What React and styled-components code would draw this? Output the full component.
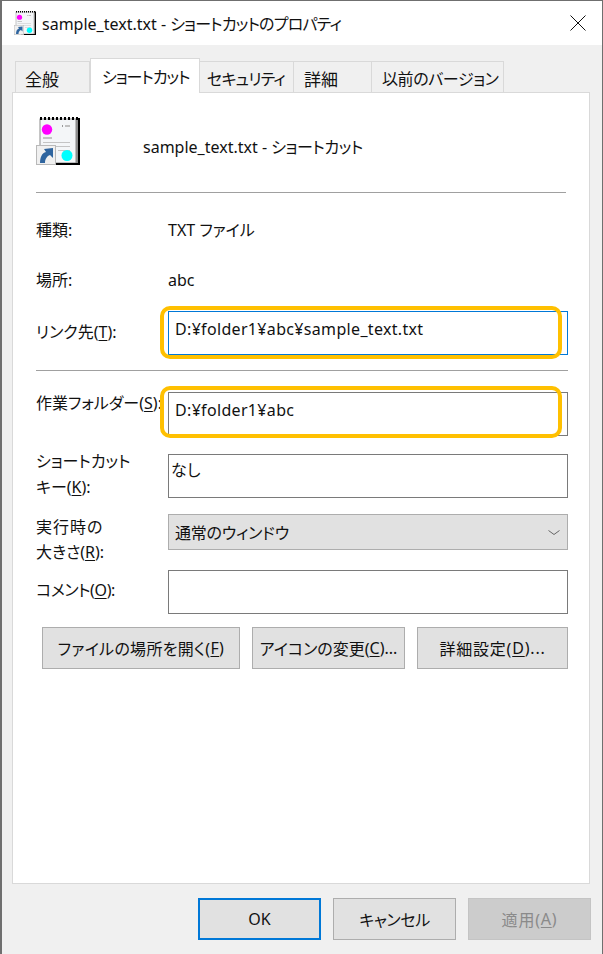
import React from 'react';
import styled, { createGlobalStyle } from 'styled-components';

const fontStack = `"Noto Sans", "Noto Sans CJK JP", sans-serif`;

const GlobalStyle = createGlobalStyle`
  html, body {
    margin: 0;
    padding: 0;
    background: #f0f0f0;
  }
  * {
    box-sizing: border-box;
  }
`;

const Window = styled.div`
  width: 603px;
  height: 954px;
  display: flex;
  flex-direction: column;
  border: 1px solid #6f6f6f;
  border-left-width: 2px;
  border-bottom: none;
  background: #f0f0f0;
  font-family: ${fontStack};
  font-size: 16px;
  font-feature-settings: "palt";
  color: #111;
  overflow: hidden;
`;

const TitleBar = styled.div`
  height: 44px;
  flex: none;
  display: flex;
  align-items: center;
  background: #fff;
  padding: 0 16px 0 12px;
  gap: 6px;
`;

const TitleText = styled.div`
  flex: 1;
  font-size: 16px;
`;

// kana run with its own tracking, the reference font sets kana tighter or kanji wider
const Spaced = styled.span`
  letter-spacing: ${(p) => p.$ls}px;
`;

const Body = styled.div`
  flex: 1;
  display: flex;
  flex-direction: column;
  padding: 13px 11px 0 10px;
`;

const TabBar = styled.div`
  display: flex;
  align-items: flex-end;
  height: 34px;
  padding-left: 4px;
  position: relative;
  z-index: 1;
`;

const Tab = styled.div`
  width: ${(p) => p.$w}px;
  height: ${(p) => (p.$active ? 35 : 31)}px;
  margin-bottom: ${(p) => (p.$active ? -1 : 0)}px;
  margin-left: ${(p) => (p.$active ? 0 : -1)}px;
  padding-left: ${(p) => p.$pl}px;
  padding-top: ${(p) => (p.$active ? 0 : 2)}px;
  padding-bottom: ${(p) => (p.$active ? 1 : 0)}px;
  display: flex;
  align-items: center;
  background: ${(p) => (p.$active ? '#fff' : '#f0f0f0')};
  border: 1px solid #d9d9d9;
  border-bottom: none;
  font-size: ${(p) => p.$size || 16}px;
  letter-spacing: ${(p) => p.$ls || 0}px;
  white-space: nowrap;
`;

const Panel = styled.div`
  width: 578px;
  height: 792px;
  background: #fff;
  border: 1px solid #d9d9d9;
  padding: 22px 22px 0 23px;
`;

const Header = styled.div`
  display: flex;
  align-items: center;
  height: 52px;
  margin-bottom: 25px;
`;

const HeaderName = styled.div`
  margin-left: 63px;
  margin-top: 10px;
`;

const Divider = styled.div`
  height: 1px;
  width: ${(p) => p.$w}px;
  background: #a0a0a0;
  margin-top: ${(p) => p.$mt || 0}px;
`;

const Row = styled.div`
  display: grid;
  grid-template-columns: 132px 400px;
  grid-template-rows: ${(p) => p.$h}px;
  margin-top: ${(p) => p.$mt}px;
`;

const Label = styled.div`
  margin-top: ${(p) => p.$top || 0}px;
  line-height: ${(p) => p.$lh || 24}px;
  letter-spacing: ${(p) => p.$ls || 0}px;
  white-space: nowrap;
`;

const Value = styled.div`
  line-height: 24px;
`;

const FieldWrap = styled.div`
  position: relative;
`;

const Input = styled.div`
  height: 100%;
  background: #fff;
  border: 1px solid ${(p) => (p.$focused ? '#0078d7' : '#7a7a7a')};
  padding: ${(p) => (p.$tight ? '3px 2px' : '5px 6px')};
  line-height: 24px;
  letter-spacing: 0.33px;
`;

const Highlight = styled.div`
  position: absolute;
  left: -8px;
  right: 6px;
  top: ${(p) => p.$top}px;
  bottom: ${(p) => p.$bottom}px;
  border: 4px solid #ffc000;
  border-radius: 10px;
`;

const Select = styled.div`
  height: 100%;
  display: flex;
  align-items: center;
  justify-content: space-between;
  background: #e1e1e1;
  border: 1px solid #adadad;
  padding: 0 7px 0 6px;
  letter-spacing: -0.2px;
`;

const ActionRow = styled.div`
  display: flex;
  justify-content: space-between;
  width: 526px;
  margin: 13px 0 0 6px;
`;

const Button = styled.div`
  width: ${(p) => p.$w}px;
  height: 42px;
  display: flex;
  align-items: center;
  justify-content: center;
  background: ${(p) => (p.$disabled ? '#cccccc' : '#e1e1e1')};
  border: ${(p) => (p.$primary ? '2px solid #0078d7' : p.$disabled ? '1px solid #c4c4c4' : '1px solid #adadad')};
  color: ${(p) => (p.$disabled ? '#8a8a8a' : '#111')};
  letter-spacing: ${(p) => p.$ls || 0}px;
`;

const Footer = styled.div`
  display: flex;
  gap: 12px;
  margin: 14px 0 0 186px;
`;

const Key = styled.span`
  text-decoration: underline;
  text-underline-offset: 2px;
`;

const IconSvg = styled.svg`
  flex: none;
  display: block;
`;

// notepad with shortcut overlay, same drawing at both sizes
const FileIcon = ({ w, h }) => (
  <IconSvg width={w} height={h} viewBox="0 0 44 48">
    <rect x="4" y="2" width="36" height="44" fill="#f4f6f8" stroke="#8b8b8b" />
    <rect x="40" y="2" width="2" height="45" fill="#8c8c8c" />
    <rect x="42" y="1" width="2" height="47" fill="#000" />
    <rect x="14" y="46" width="28" height="2" fill="#000" />
    <path d="M4 1.500H42" stroke="#000" strokeWidth="3" strokeDasharray="2 2" />
    <circle cx="11" cy="12.500" r="5.200" fill="#ff00ff" />
    <rect x="26" y="8" width="1" height="2" fill="#999" />
    <rect x="29" y="8" width="5" height="2" fill="#c0c0c0" />
    <rect x="7" y="20" width="9" height="2" fill="#c4c4c4" />
    <rect x="7" y="25" width="27" height="1" fill="#c4c4c4" />
    <rect x="7" y="29" width="27" height="1" fill="#c4c4c4" />
    <rect x="22" y="33" width="12" height="1" fill="#c4c4c4" />
    <circle cx="31" cy="38.500" r="5.500" fill="#00ffff" />
    <rect x="0.500" y="28.500" width="19" height="19" fill="#f0f0f0" stroke="#b9b9b9" />
    <path d="M4 46C4 40 6 36 10 35L8 32L17 31L17 41L14 38C11 39 9 42 9 46Z" fill="#2f659f" />
  </IconSvg>
);

const App = () => (
  <Window>
    <GlobalStyle />
    <TitleBar>
      <FileIcon w={22} h={24} />
      <TitleText>sample_text.txt - <Spaced $ls={-0.8}>ショートカットのプロパティ</Spaced></TitleText>
      <svg width="16" height="16" viewBox="0 0 16 16">
        <path d="M0.500 0.500L15.500 15.500M15.500 0.500L0.500 15.500" stroke="#111" strokeWidth="1" fill="none" />
      </svg>
    </TitleBar>
    <Body>
      <TabBar>
        <Tab $w={75} $pl={9} $size={17}>全般</Tab>
        <Tab $w={110} $pl={11} $ls={-1} $active>ショートカット</Tab>
        <Tab $w={95} $pl={7} $ls={-0.8}>セキュリティ</Tab>
        <Tab $w={79} $pl={10} $size={17}>詳細</Tab>
        <Tab $w={133} $pl={10} $ls={-0.4}>以前のバージョン</Tab>
      </TabBar>
      <Panel>
        <Header>
          <FileIcon w={44} h={48} />
          <HeaderName>sample_text.txt - <Spaced $ls={-0.4}>ショートカット</Spaced></HeaderName>
        </Header>
        <Divider $w={530} />
        <Row $h={24} $mt={25}>
          <Label>種類:</Label>
          <Value>TXT ファイル</Value>
        </Row>
        <Row $h={24} $mt={26}>
          <Label>場所:</Label>
          <Value>abc</Value>
        </Row>
        <Row $h={44} $mt={19}>
          <Label $top={9}>リンク先(<Key>T</Key>):</Label>
          <FieldWrap>
            <Input $focused>D:¥folder1¥abc¥sample_text.txt</Input>
            <Highlight $top={-5} $bottom={-4} />
          </FieldWrap>
        </Row>
        <Divider $w={532} $mt={15} />
        <Row $h={44} $mt={21}>
          <Label $top={-1}>作業フォルダー(<Key>S</Key>):</Label>
          <FieldWrap>
            <Input>D:¥folder1¥abc</Input>
            <Highlight $top={-6} $bottom={-2} />
          </FieldWrap>
        </Row>
        <Row $h={44} $mt={18}>
          <Label $top={-6} $lh={26}>
            ショートカット
            <br />
            キー(<Key>K</Key>):
          </Label>
          <Input $tight>なし</Input>
        </Row>
        <Row $h={36} $mt={16}>
          <Label $top={1} $lh={25}>
            <Spaced $ls={1}>実行時の</Spaced>
            <br />
            大きさ(<Key>R</Key>):
          </Label>
          <Select>
            通常のウィンドウ
            <svg width="12" height="5" viewBox="0 0 12 5">
              <path d="M0.500 0.500L6 4.500L11.500 0.500" stroke="#666" fill="none" />
            </svg>
          </Select>
        </Row>
        <Row $h={44} $mt={20}>
          <Label $top={8} $ls={-0.4}>コメント(<Key>O</Key>):</Label>
          <Input />
        </Row>
        <ActionRow>
          <Button $w={198} $ls={0.3}>ファイルの場所を開く(<Key>F</Key>)</Button>
          <Button $w={153}>アイコンの変更(<Key>C</Key>)...</Button>
          <Button $w={151} $ls={0.8}>詳細設定(<Key>D</Key>)...</Button>
        </ActionRow>
      </Panel>
      <Footer>
        <Button $w={123} $primary>OK</Button>
        <Button $w={123} $ls={-0.4}>キャンセル</Button>
        <Button $w={123} $disabled $ls={0.8}>適用(<Key>A</Key>)</Button>
      </Footer>
    </Body>
  </Window>
);

export default App;
